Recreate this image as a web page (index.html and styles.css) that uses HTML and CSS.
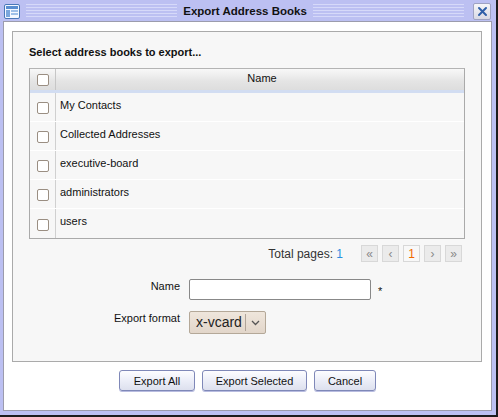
FILE: index.html
```html
<!DOCTYPE html>
<html>
<head>
<meta charset="utf-8">
<link rel="stylesheet" href="styles.css">
</head>
<body>
<div class="window">
  <div class="titlebar">
    <span class="ticon">
      <svg width="16" height="15" viewBox="0 0 16 15">
        <rect x="0.5" y="0.5" width="15" height="14" rx="1.5" fill="#f4f8ff" stroke="#4a78b8"/>
        <rect x="2" y="2" width="12" height="3" fill="#5a8ed0"/>
        <rect x="2" y="6" width="4" height="7" fill="#7aa6dc"/>
        <rect x="7" y="6" width="7" height="2" fill="#9fc0e8"/>
        <rect x="7" y="9" width="7" height="2" fill="#9fc0e8"/>
      </svg>
    </span>
    <span class="stripes"></span>
    <span class="title">Export Address Books</span>
    <span class="stripes"></span>
    <span class="close">
      <svg width="11" height="11" viewBox="0 0 11 11">
        <path d="M2 2 L9 9 M9 2 L2 9" stroke="#2f5fa8" stroke-width="2" stroke-linecap="round"/>
      </svg>
    </span>
  </div>
  <div class="content">
    <div class="panel">
      <div class="heading">Select address books to export...</div>
      <div class="grid">
        <div class="ghead">
          <div class="ccell"><span class="cb"></span></div>
          <div class="ncell hname">Name</div>
        </div>
        <div class="grow"><div class="ccell"><span class="cb"></span></div><div class="ncell">My Contacts</div></div>
        <div class="grow"><div class="ccell"><span class="cb"></span></div><div class="ncell">Collected Addresses</div></div>
        <div class="grow"><div class="ccell"><span class="cb"></span></div><div class="ncell">executive-board</div></div>
        <div class="grow"><div class="ccell"><span class="cb"></span></div><div class="ncell">administrators</div></div>
        <div class="grow last"><div class="ccell"><span class="cb"></span></div><div class="ncell">users</div></div>
      </div>
      <div class="pager">
        <span class="total">Total pages: <span class="tnum">1</span></span>
        <span class="pbtn">&#171;</span>
        <span class="pbtn">&#8249;</span>
        <span class="pbtn cur">1</span>
        <span class="pbtn">&#8250;</span>
        <span class="pbtn">&#187;</span>
      </div>
      <div class="form">
        <div class="flabel">Name</div>
        <div class="ffield"><span class="input"></span><span class="req">*</span></div>
        <div class="flabel">Export format</div>
        <div class="ffield"><span class="select"><span class="sval">x-vcard</span><span class="sarrow"><svg width="9" height="6" viewBox="0 0 9 6"><path d="M1 1 L4.5 4.5 L8 1" fill="none" stroke="#555" stroke-width="1.3"/></svg></span></span></div>
      </div>
    </div>
    <div class="buttons">
      <span class="btn b1">Export All</span>
      <span class="btn b2">Export Selected</span>
      <span class="btn b3">Cancel</span>
    </div>
  </div>
</div>
</body>
</html>
```
FILE: styles.css
```css
html, body { margin: 0; padding: 0; background: #fff; }
body { font-family: "Liberation Sans", Arial, sans-serif; font-size: 11px; color: #111; }

.window {
  width: 498px; height: 417px; box-sizing: border-box;
  background: #bcc0f2;
  border-right: 2px solid #1c1c1c; border-bottom: 2px solid #1c1c1c;
  padding: 0 4px 4px 3px;
  display: flex; flex-direction: column;
}
.titlebar {
  height: 21px; display: flex; align-items: center; flex: none;
}
.ticon { width: 16px; height: 15px; margin-left: 1px; margin-top: 1px; display: flex; }
.stripes {
  flex: 1; height: 14px; margin: 1px 6px 0 6px;
  background: repeating-linear-gradient(to bottom, #d6d9f9 0, #d6d9f9 1px, transparent 1px, transparent 3px);
}
.stripes:first-of-type { margin-left: 7px; }
.title { font-weight: bold; font-size: 11.5px; color: #111; }
.close {
  width: 16px; height: 15px; margin-right: 1px; margin-top: 1px; margin-left: 3px;
  background: linear-gradient(#f6f6f9, #d8d9e4);
  border: 1px solid #9ea2c2; border-radius: 2px;
  display: flex; align-items: center; justify-content: center;
}
.content {
  flex: 1; background: #fff; border: 1px solid #9c9cac;
  display: flex; flex-direction: column;
}
.panel {
  margin: 9px 0 0 8px; width: 470px; height: 331px; box-sizing: border-box;
  background: #f7f7f7; border: 1px solid #aaa;
  padding: 13px 0 0 16px;
}
.heading { font-weight: bold; font-size: 11px; line-height: 14px; height: 14px; }
.grid {
  margin-top: 9px; width: 436px; box-sizing: border-box;
  border: 1px solid #aaa; border-top-color: #b4b4b4;
  background: #f7f7f7;
}
.ghead {
  display: flex; height: 21px;
  background: linear-gradient(#f8f8f8 0, #e4e4e4 60%, #dddddd 100%);
  border-bottom: 3px solid #d2ddf2;
}
.ghead .ccell { border-right: 1px solid #c6c6c6; }
.hname { justify-content: center; padding-left: 0; padding-bottom: 0; padding-top: 2px; }
.grow { display: flex; height: 28px; border-bottom: 1px solid #fff; }
.grow.last { border-bottom: none; height: 29px; }
.ccell {
  width: 25px; flex: none; border-right: 1px solid #d0d0d0;
  display: flex; align-items: center; justify-content: center;
}
.ncell { flex: 1; display: flex; align-items: center; padding-left: 4px; padding-bottom: 5px; }
.cb {
  width: 10px; height: 10px; border: 1px solid #9a8e82; border-radius: 2px; background: #fff;
  margin-top: 2px;
}
.ghead .cb { margin-top: 0; }
.pager {
  width: 436px; display: flex; justify-content: flex-end; align-items: center;
  margin-top: 5px; height: 19px; padding-right: 3px; box-sizing: border-box;
}
.total { font-size: 12px; color: #333; margin-right: 14px; }
.tnum { color: #2a8ee0; }
.pbtn {
  width: 15px; height: 15px; border: 1px solid #d8d8d8; background: #ebebeb;
  margin-left: 4px; display: flex; align-items: center; justify-content: center;
  font-size: 12px; color: #888; line-height: 1;
}
.pbtn.cur { background: #f8f8f8; color: #f06800; font-size: 12px; }
.form {
  display: grid; grid-template-columns: 151px auto; column-gap: 9px; row-gap: 11px;
  margin-top: 16px;
}
.flabel { text-align: right; padding-top: 1px; font-size: 11px; }
.ffield { display: flex; align-items: flex-start; }
.input {
  width: 180px; height: 19px; border: 1px solid #888; border-radius: 2px; background: #fff;
}
.req { margin-left: 7px; margin-top: 6px; font-size: 11px; }
.select {
  display: flex; height: 21px; border: 1px solid #b4a898; border-radius: 2px;
  background: linear-gradient(#efe6dc, #e2d6ca);
}
.sval { font-size: 14px; padding: 0 3px 0 6px; line-height: 21px; color: #222; }
.sarrow { border-left: 1px solid #b0a498; width: 19px; display: flex; align-items: center; justify-content: center; margin: 2px 0; }
.buttons {
  display: flex; justify-content: center; gap: 7px; margin-top: 8px;
}
.btn {
  height: 19px; box-sizing: content-box; border: 1px solid #7f88b8; border-radius: 3px;
  background: linear-gradient(#fdfdff 0, #eceef8 50%, #dde0ee 100%);
  display: flex; align-items: center; justify-content: center; font-size: 11px;
  box-shadow: 0 1px 0 #b8bce0;
}
.b1 { width: 74px; }
.b2 { width: 103px; }
.b3 { width: 60px; }
```
